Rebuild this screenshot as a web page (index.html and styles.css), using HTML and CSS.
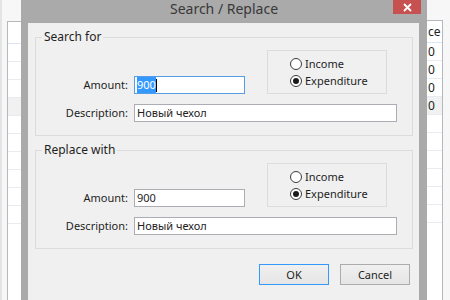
FILE: index.html
```html
<!DOCTYPE html>
<html lang="en">
<head>
  <meta charset="UTF-8">
  <title>Search / Replace</title>
  <link rel="stylesheet" href="styles.css">
</head>
<body>
  <div class="desktop">
    <div class="side side-left">
      <div class="sheet">
        <div class="cell head"></div>
        <div class="cell"></div>
        <div class="cell"></div>
        <div class="cell"></div>
        <div class="cell shaded"></div>
        <div class="cell"></div>
        <div class="cell"></div>
        <div class="cell"></div>
        <div class="cell"></div>
        <div class="cell"></div>
        <div class="cell"></div>
      </div>
    </div>

    <div class="dialog">
      <div class="title-bar">
        <span></span>
        <h1>Search / Replace</h1>
        <span class="close">
          <svg width="9" height="9" viewBox="0 0 9 9"><path d="M1 1L8 8M8 1L1 8" stroke="#fff" stroke-width="1.8"/></svg>
        </span>
      </div>

      <div class="client">
        <fieldset class="group">
          <legend>Search for</legend>
          <div class="group-grid">
            <span class="label">Amount:</span>
            <div class="field field-amount focused"><span class="sel">900</span><span class="caret"></span></div>
            <div class="radio-box">
              <div class="radio"><span class="dot"></span>Income</div>
              <div class="radio checked"><span class="dot"></span>Expenditure</div>
            </div>
            <span class="label">Description:</span>
            <div class="field field-desc">Новый чехол</div>
          </div>
        </fieldset>

        <fieldset class="group">
          <legend>Replace with</legend>
          <div class="group-grid">
            <span class="label">Amount:</span>
            <div class="field field-amount">900</div>
            <div class="radio-box">
              <div class="radio"><span class="dot"></span>Income</div>
              <div class="radio checked"><span class="dot"></span>Expenditure</div>
            </div>
            <span class="label">Description:</span>
            <div class="field field-desc">Новый чехол</div>
          </div>
        </fieldset>

        <div class="buttons">
          <button class="btn default">OK</button>
          <button class="btn">Cancel</button>
        </div>
      </div>
    </div>

    <div class="side side-right">
      <div class="sheet">
        <div class="cell head"><span>ce</span></div>
        <div class="cell"><span>0</span></div>
        <div class="cell"><span>0</span></div>
        <div class="cell"><span>0</span></div>
        <div class="cell shaded"><span>0</span></div>
        <div class="cell"></div>
        <div class="cell"></div>
        <div class="cell"></div>
        <div class="cell"></div>
        <div class="cell"></div>
        <div class="cell"></div>
      </div>
    </div>
  </div>
</body>
</html>
```

FILE: styles.css
```css
* {
  margin: 0;
  padding: 0;
  box-sizing: border-box;
}

body {
  width: 450px;
  height: 300px;
  overflow: hidden;
  font-family: 'Noto Sans', 'DejaVu Sans', sans-serif;
  font-size: 11px;
  color: #1e1e1e;
  background: #f7f7f7;
}

.desktop {
  display: flex;
  height: 300px;
}

/* background app, mostly hidden by the dialog */
.side {
  display: flex;
  flex-direction: column;
}

.side-left {
  width: 21px;
  border-left: 2px solid #e4e4e4;
  padding-left: 5px;
}

.side-right {
  width: 23px;
  padding-right: 7px;
}

.sheet {
  flex: 1;
  margin-top: 21px;
  background: #fff;
  border-top: 1px solid #b4b8bf;
}

.side-left .sheet { border-left: 1px solid #b4b8bf; }
.side-right .sheet { border-right: 1px solid #b4b8bf; margin-top: 20px; }

.cell {
  height: 18px;
  border-bottom: 1px solid #e8ebef;
  display: flex;
  align-items: center;
  justify-content: flex-start;
  overflow: hidden;
  white-space: nowrap;
  padding-left: 1px;
  font-size: 12px;
}

.cell.head {
  height: 22px;
  border-bottom-color: #dbe6f2;
}

.cell.shaded { background: #f1f1f1; }

/* dialog window */
.dialog {
  width: 406px;
  height: 300px;
  background: #aaaaaa;
  display: flex;
  flex-direction: column;
}

.title-bar {
  height: 23px;
  display: grid;
  grid-template-columns: 1fr auto 1fr;
}

.title-bar h1 {
  font-size: 14px;
  font-weight: normal;
  line-height: 18px;
  color: #383838;
}

.close {
  justify-self: end;
  width: 28px;
  height: 14px;
  margin-right: 6px;
  background: #c75050;
  display: flex;
  align-items: center;
  justify-content: center;
}

.client {
  flex: 1;
  margin: 0 8px 0 7px;
  background: #f0f0f0;
  padding: 6px 6px 0 7px;
}

.group {
  border: 1px solid #dcdcdc;
  padding: 5px 15px 13px 0;
  min-width: 0;
  margin-bottom: 6px;
}

.group legend {
  margin-left: 6px;
  padding: 0 2px;
  font-size: 12px;
  line-height: 16px;
}

.group-grid {
  display: grid;
  grid-template-columns: 98px 111px 22px 120px 10px;
  grid-template-rows: auto auto;
  row-gap: 10px;
}

.label {
  grid-column: 1;
  height: 18px;
  align-self: end;
  text-align: right;
  padding-right: 6px;
  line-height: 18px;
}

.field {
  height: 18px;
  align-self: end;
  background: #fff;
  border: 1px solid #abadb3;
  padding-left: 2px;
  line-height: 16px;
  display: flex;
  align-items: center;
}

.field.focused { border-color: #569de5; }

.field-amount { grid-column: 2; grid-row: 1; }
.field-desc { grid-column: 2 / 6; grid-row: 2; }

.sel {
  background: #3399ff;
  color: #fff;
}

.caret {
  width: 1px;
  height: 13px;
  background: #000;
}

.radio-box {
  grid-column: 4;
  grid-row: 1;
  height: 44px;
  border: 1px solid #dcdcdc;
  padding: 4px 0 0 22px;
}

.radio {
  height: 17px;
  display: flex;
  align-items: center;
}

.dot {
  width: 12px;
  height: 12px;
  margin-right: 3px;
  border: 1px solid #3c3c3c;
  border-radius: 50%;
  background: #fff;
  display: flex;
  align-items: center;
  justify-content: center;
}

.radio.checked .dot::after {
  content: '';
  width: 6px;
  height: 6px;
  border-radius: 50%;
  background: #1a1a1a;
}

.buttons {
  display: flex;
  justify-content: flex-end;
  gap: 11px;
  margin: 15px 3px 0 0;
}

.btn {
  width: 70px;
  height: 21px;
  font-family: inherit;
  font-size: 11px;
  color: #1e1e1e;
  background: linear-gradient(#f0f0f0, #e5e5e5);
  border: 1px solid #acacac;
}

.btn.default { border-color: #3399ff; }
```
